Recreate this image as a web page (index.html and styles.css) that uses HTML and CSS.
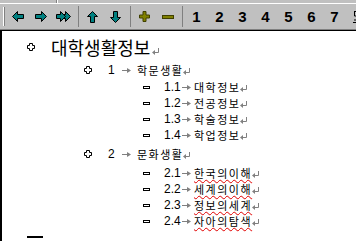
FILE: index.html
```html
<!DOCTYPE html>
<html lang="ko">
<head>
  <meta charset="UTF-8">
  <title>개요 보기</title>
  <link rel="stylesheet" href="styles.css">
</head>
<body>
  <div class="topstrip"><span class="seg"></span></div>

  <div class="toolbar">
    <span class="grip"></span>
    <span class="btn"><svg width="12" height="11" viewBox="0 0 12 11"><polygon class="teal" points="0.5,5.5 5.5,0.5 5.5,3.5 11.5,3.5 11.5,7.5 5.5,7.5 5.5,10.5"/></svg></span>
    <span class="btn"><svg width="12" height="11" viewBox="0 0 12 11"><polygon class="teal" points="11.5,5.5 6.5,0.5 6.5,3.5 0.5,3.5 0.5,7.5 6.5,7.5 6.5,10.5"/></svg></span>
    <span class="btn"><svg width="15" height="11" viewBox="0 0 15 11"><polygon class="teal" points="9.5,5.5 4.5,0.5 4.5,3.5 0.5,3.5 0.5,7.5 4.5,7.5 4.5,10.5"/><polygon class="teal" points="14.5,5.5 9.5,0.5 9.5,3.5 7.5,3.5 9.5,5.5 7.5,7.5 9.5,7.5 9.5,10.5"/></svg></span>
    <span class="sep"></span>
    <span class="btn"><svg width="11" height="12" viewBox="0 0 11 12"><polygon class="teal" points="5.5,0.5 10.5,5.5 7.5,5.5 7.5,11.5 3.5,11.5 3.5,5.5 0.5,5.5"/></svg></span>
    <span class="btn"><svg width="11" height="12" viewBox="0 0 11 12"><polygon class="teal" points="5.5,11.5 10.5,6.5 7.5,6.5 7.5,0.5 3.5,0.5 3.5,6.5 0.5,6.5"/></svg></span>
    <span class="sep"></span>
    <span class="btn"><svg width="11" height="11" viewBox="0 0 11 11"><polygon class="olive" points="4,0.5 7,0.5 7,4 10.5,4 10.5,7 7,7 7,10.5 4,10.5 4,7 0.5,7 0.5,4 4,4"/></svg></span>
    <span class="btn"><svg width="12" height="4" viewBox="0 0 12 4"><rect class="olive" x="0.5" y="0.5" width="11" height="3"/></svg></span>
    <span class="sep"></span>
    <span class="btn num">1</span>
    <span class="btn num">2</span>
    <span class="btn num">3</span>
    <span class="btn num">4</span>
    <span class="btn num">5</span>
    <span class="btn num">6</span>
    <span class="btn num">7</span>
    <span class="btn"><svg width="10" height="14" viewBox="0 0 10 14"><path d="M1 1.5h6M1.5 1v5h4.5v4h-5M0 12.5h10" stroke="#000" fill="none"/></svg></span>
  </div>

  <div class="doc">
    <div class="row lv0">
      <span class="sym"><svg width="8" height="8" viewBox="0 0 8 8"><polygon class="plus" points="2.5,0.5 5.5,0.5 5.5,2.5 7.5,2.5 7.5,5.5 5.5,5.5 5.5,7.5 2.5,7.5 2.5,5.5 0.5,5.5 0.5,2.5 2.5,2.5"/></svg></span>
      <span class="txt">대학생활정보</span><svg class="pm" width="8" height="7" viewBox="0 0 8 7"><path d="M6.5 0v4.5H2"/><polygon points="0,4.5 3,2 3,7"/></svg>
    </div>

    <div class="row lv1">
      <span class="sym"><svg width="8" height="8" viewBox="0 0 8 8"><polygon class="plus" points="2.5,0.5 5.5,0.5 5.5,2.5 7.5,2.5 7.5,5.5 5.5,5.5 5.5,7.5 2.5,7.5 2.5,5.5 0.5,5.5 0.5,2.5 2.5,2.5"/></svg></span>
      <span class="no">1</span><span class="tab"><svg width="9" height="5" viewBox="0 0 9 5"><path d="M0 2.5h6"/><polygon points="9,2.5 5,0 5,5"/></svg></span><span class="txt">학문생활</span><svg class="pm" width="8" height="7" viewBox="0 0 8 7"><path d="M6.5 0v4.5H2"/><polygon points="0,4.5 3,2 3,7"/></svg>
    </div>
    <div class="row lv2"><span class="sym"><i class="minus"></i></span><span class="no">1.1</span><span class="tab"><svg width="9" height="5" viewBox="0 0 9 5"><path d="M0 2.5h6"/><polygon points="9,2.5 5,0 5,5"/></svg></span><span class="txt">대학정보</span><svg class="pm" width="8" height="7" viewBox="0 0 8 7"><path d="M6.5 0v4.5H2"/><polygon points="0,4.5 3,2 3,7"/></svg></div>
    <div class="row lv2"><span class="sym"><i class="minus"></i></span><span class="no">1.2</span><span class="tab"><svg width="9" height="5" viewBox="0 0 9 5"><path d="M0 2.5h6"/><polygon points="9,2.5 5,0 5,5"/></svg></span><span class="txt">전공정보</span><svg class="pm" width="8" height="7" viewBox="0 0 8 7"><path d="M6.5 0v4.5H2"/><polygon points="0,4.5 3,2 3,7"/></svg></div>
    <div class="row lv2"><span class="sym"><i class="minus"></i></span><span class="no">1.3</span><span class="tab"><svg width="9" height="5" viewBox="0 0 9 5"><path d="M0 2.5h6"/><polygon points="9,2.5 5,0 5,5"/></svg></span><span class="txt">학술정보</span><svg class="pm" width="8" height="7" viewBox="0 0 8 7"><path d="M6.5 0v4.5H2"/><polygon points="0,4.5 3,2 3,7"/></svg></div>
    <div class="row lv2"><span class="sym"><i class="minus"></i></span><span class="no">1.4</span><span class="tab"><svg width="9" height="5" viewBox="0 0 9 5"><path d="M0 2.5h6"/><polygon points="9,2.5 5,0 5,5"/></svg></span><span class="txt">학업정보</span><svg class="pm" width="8" height="7" viewBox="0 0 8 7"><path d="M6.5 0v4.5H2"/><polygon points="0,4.5 3,2 3,7"/></svg></div>

    <div class="row lv1 second">
      <span class="sym"><svg width="8" height="8" viewBox="0 0 8 8"><polygon class="plus" points="2.5,0.5 5.5,0.5 5.5,2.5 7.5,2.5 7.5,5.5 5.5,5.5 5.5,7.5 2.5,7.5 2.5,5.5 0.5,5.5 0.5,2.5 2.5,2.5"/></svg></span>
      <span class="no">2</span><span class="tab"><svg width="9" height="5" viewBox="0 0 9 5"><path d="M0 2.5h6"/><polygon points="9,2.5 5,0 5,5"/></svg></span><span class="txt">문화생활</span><svg class="pm" width="8" height="7" viewBox="0 0 8 7"><path d="M6.5 0v4.5H2"/><polygon points="0,4.5 3,2 3,7"/></svg>
    </div>
    <div class="row lv2"><span class="sym"><i class="minus"></i></span><span class="no">2.1</span><span class="tab"><svg width="9" height="5" viewBox="0 0 9 5"><path d="M0 2.5h6"/><polygon points="9,2.5 5,0 5,5"/></svg></span><span class="txt wavy">한국의이해</span><svg class="pm" width="8" height="7" viewBox="0 0 8 7"><path d="M6.5 0v4.5H2"/><polygon points="0,4.5 3,2 3,7"/></svg></div>
    <div class="row lv2"><span class="sym"><i class="minus"></i></span><span class="no">2.2</span><span class="tab"><svg width="9" height="5" viewBox="0 0 9 5"><path d="M0 2.5h6"/><polygon points="9,2.5 5,0 5,5"/></svg></span><span class="txt wavy">세계의이해</span><svg class="pm" width="8" height="7" viewBox="0 0 8 7"><path d="M6.5 0v4.5H2"/><polygon points="0,4.5 3,2 3,7"/></svg></div>
    <div class="row lv2"><span class="sym"><i class="minus"></i></span><span class="no">2.3</span><span class="tab"><svg width="9" height="5" viewBox="0 0 9 5"><path d="M0 2.5h6"/><polygon points="9,2.5 5,0 5,5"/></svg></span><span class="txt wavy">정보의세계</span><svg class="pm" width="8" height="7" viewBox="0 0 8 7"><path d="M6.5 0v4.5H2"/><polygon points="0,4.5 3,2 3,7"/></svg></div>
    <div class="row lv2"><span class="sym"><i class="minus"></i></span><span class="no">2.4</span><span class="tab"><svg width="9" height="5" viewBox="0 0 9 5"><path d="M0 2.5h6"/><polygon points="9,2.5 5,0 5,5"/></svg></span><span class="txt wavy">자아의탐색</span><svg class="pm" width="8" height="7" viewBox="0 0 8 7"><path d="M6.5 0v4.5H2"/><polygon points="0,4.5 3,2 3,7"/></svg></div>

    <div class="endmark"></div>
  </div>
</body>
</html>
```

FILE: styles.css
```css
body {
  margin: 0;
  width: 356px;
  height: 241px;
  overflow: hidden;
  background: #fff;
  font-family: 'Liberation Sans', 'Noto Sans CJK KR', sans-serif;
}

/* toolbar area */
.topstrip {
  height: 3px;
  background: #c0c0c0;
  border-bottom: 1px solid #fff;
  position: relative;
}
.topstrip .seg {
  position: absolute;
  left: 56px;
  top: 0;
  width: 1px;
  height: 3px;
  background: #fff;
  border-left: 1px solid #808080;
}
.toolbar {
  display: flex;
  align-items: center;
  height: 25px;
  background: #c0c0c0;
  padding-left: 3px;
  border-bottom: 1px solid #808080;
}
.grip {
  width: 1px;
  height: 19px;
  border-left: 1px solid #fff;
  border-right: 1px solid #808080;
  margin-right: 1px;
}
.btn {
  width: 23px;
  flex: none;
  display: flex;
  justify-content: center;
  align-items: center;
}
.btn svg {
  display: block;
}
.sep {
  width: 1px;
  height: 21px;
  margin: 0 2px 0 3px;
  border-left: 1px solid #808080;
  background: #fff;
}
.num {
  font-weight: bold;
  font-size: 15px;
  color: #000;
}
.teal {
  fill: #008080;
  stroke: #000;
  stroke-width: 1;
}
.olive {
  fill: #808000;
  stroke: #404000;
  stroke-width: 1;
}

/* outline document */
.doc {
  border-top: 1px solid #000;
  border-left: 2px solid #000;
  height: 210px;
  color: #000;
}
.row {
  display: flex;
  align-items: center;
  height: 16px;
  font-size: 12px;
}
.sym {
  flex: none;
  display: flex;
  align-items: center;
}
.plus {
  fill: #fff;
  stroke: #000;
  stroke-width: 1;
}
.minus {
  display: block;
  width: 5px;
  height: 1px;
  border: 1px solid #000;
}
.no {
  flex: none;
}
.tab {
  flex: none;
  display: flex;
  align-items: center;
  padding-left: 2px;
}
.tab svg path,
.pm path {
  stroke: #808080;
  fill: none;
}
.tab svg polygon,
.pm polygon {
  fill: #808080;
}
.txt {
  font-family: 'Noto Sans CJK KR', sans-serif;
  font-size: 11px;
  letter-spacing: 1.5px;
  line-height: 16px;
}
.wavy {
  text-decoration: underline wavy #e00000;
  text-decoration-thickness: 1px;
  text-underline-offset: 1px;
}
.pm {
  flex: none;
  margin-left: 0;
  margin-top: 3px;
}

.lv0 {
  height: 28px;
  margin-top: 2px;
  padding-left: 25px;
}
.lv0 .sym {
  width: 24px;
}
.lv0 .txt {
  font-size: 18px;
  letter-spacing: 0;
  line-height: 28px;
}
.lv0 .pm {
  margin-left: 2px;
  margin-top: 8px;
}

.lv1 {
  height: 18px;
  padding-left: 82px;
}
.lv1.second {
  margin-top: 2px;
  height: 20px;
  padding-bottom: 2px;
  box-sizing: border-box;
}
.lv1 .sym {
  width: 24px;
}
.lv1 .no {
  width: 12px;
}
.lv1 .tab {
  width: 15px;
}

.lv2 {
  padding-left: 141px;
}
.lv2 .sym {
  width: 21px;
}
.lv2 .no {
  width: 16px;
}
.lv2 .tab {
  width: 12px;
}

.endmark {
  width: 16px;
  height: 2px;
  margin: 7px 0 0 25px;
  background: #000;
}
```
